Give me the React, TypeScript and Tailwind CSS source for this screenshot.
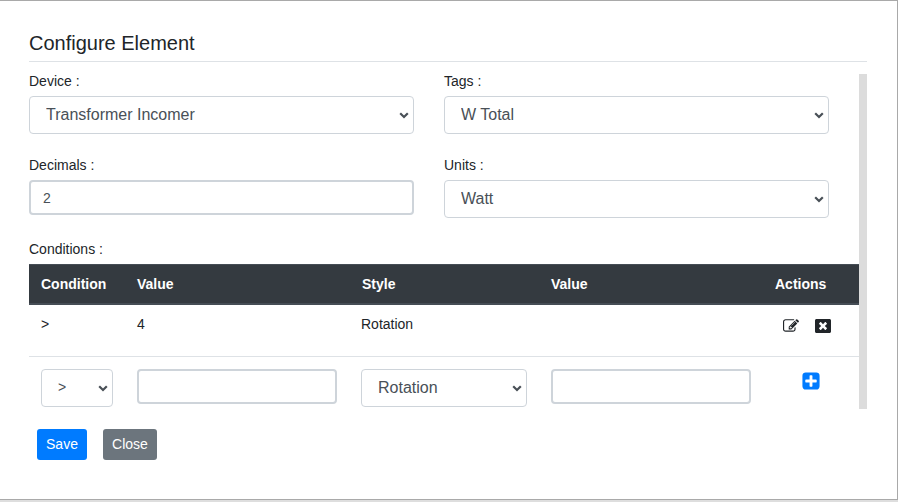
import type { ReactNode } from "react";
import { FaWindowClose } from "react-icons/fa";

const INPUT =
  "block h-[35px] w-full rounded border-2 border-[#ced4da] bg-white px-3 text-[14px] text-[#495057]";

function Select({ value, small = false }: { value: string; small?: boolean }) {
  return (
    <div className="relative">
      <select
        className={`block h-[38px] w-full appearance-none rounded border border-[#ced4da] bg-white px-4 text-[#495057] ${
          small ? "pt-[5px] pb-[7px] text-[14px]" : "pt-1.5 pb-[7px] text-[16px]"
        }`}
      >
        <option>{value}</option>
      </select>
      <svg
        viewBox="0 0 10 7"
        className="pointer-events-none absolute right-[5px] top-4 h-[7px] w-[10px]"
        fill="none"
        stroke="#495057"
        strokeWidth="2.2"
      >
        <path d="M1.2 1.2L5 5l3.8-3.8" />
      </svg>
    </div>
  );
}

function Field({ label, children }: { label: string; children: ReactNode }) {
  return (
    <div className="h-[84px]">
      <label className="block h-[22px] leading-[15px]">{label}</label>
      {children}
    </div>
  );
}

function EditIcon() {
  return (
    <svg viewBox="0 0 1792 1792" className="size-4" fill="currentColor">
      <path d="M888 1184l116-116-152-152-116 116v56h96v96h56zm440-720q-16-16-33 1l-350 350q-17 17-1 33t33-1l350-350q17-17 1-33zm80 594v190q0 119-84.5 203.5t-203.5 84.5h-832q-119 0-203.5-84.5t-84.5-203.5v-832q0-119 84.5-203.5t203.5-84.5h832q63 0 117 25 15 7 18 23 3 17-9 29l-49 49q-14 14-32 8-23-6-45-6h-832q-66 0-113 47t-47 113v832q0 66 47 113t113 47h832q66 0 113-47t47-113v-126q0-13 9-22l64-64q15-15 35-7t20 29zm-96-738l288 288-672 672h-288v-288zm444 132l-92 92-288-288 92-92q28-28 68-28t68 28l152 152q28 28 28 68t-28 68z" />
    </svg>
  );
}

function PlusIcon() {
  return (
    <svg viewBox="0 0 1792 1792" className="size-5" fill="currentColor">
      <path d="M1408 960v-128q0-26-19-45t-45-19h-320v-320q0-26-19-45t-45-19h-128q-26 0-45 19t-19 45v320h-320q-26 0-45 19t-19 45v128q0 26 19 45t45 19h320v320q0 26 19 45t45 19h128q26 0 45-19t19-45v-320h320q26 0 45-19t19-45zm256-544v960q0 119-84.5 203.5t-203.5 84.5h-960q-119 0-203.5-84.5t-84.5-203.5v-960q0-119 84.5-203.5t203.5-84.5h960q119 0 203.5 84.5t84.5 203.5z" />
    </svg>
  );
}

const ROW = "grid grid-cols-[96px_224px_190px_224px_96px]";

export default function App() {
  return (
    <div className="h-[502px] w-[898px] bg-[#dedede] font-['Liberation_Sans',Arial,sans-serif] text-[14px] text-[#212529]">
      <div className="h-[500px] border-t border-r border-b border-[#a9a9a9] bg-white pl-[29px] pr-[30px] pt-[29px]">
        <h1 className="h-8 border-b border-[#dee2e6] text-[20px] leading-[27px]">Configure Element</h1>

        <div className="mt-3 flex h-[335px] w-[838px]">
          <div className="w-[830px]">
            <div className="grid w-[800px] grid-cols-2 gap-x-[30px]">
              <Field label="Device :">
                <Select value="Transformer Incomer" />
              </Field>
              <Field label="Tags :">
                <Select value="W Total" />
              </Field>
              <Field label="Decimals :">
                <input className={INPUT} defaultValue="2" />
              </Field>
              <Field label="Units :">
                <Select value="Watt" />
              </Field>
            </div>

            <div className="h-[22px] leading-[15px]">Conditions :</div>

            <div
              className={`${ROW} h-[41px] border-t border-b-2 border-[#454d55] bg-[#343a40] font-bold leading-[38px] text-white`}
            >
              <div className="pl-3">Condition</div>
              <div className="pl-3">Value</div>
              <div className="pl-[13px]">Style</div>
              <div className="pl-3">Value</div>
              <div className="pl-3">Actions</div>
            </div>

            <div className={`${ROW} h-[51px] leading-[38px]`}>
              <div className="pl-3">&gt;</div>
              <div className="pl-3">4</div>
              <div className="pl-3">Rotation</div>
              <div />
              <div className="flex gap-4 pl-5 pt-[13px]">
                <EditIcon />
                <FaWindowClose size={16} />
              </div>
            </div>

            <div className={`${ROW} h-[53px] border-t border-[#dee2e6] pt-3`}>
              <div className="px-3">
                <Select value=">" small />
              </div>
              <div className="px-3">
                <input className={INPUT} />
              </div>
              <div className="px-3">
                <Select value="Rotation" />
              </div>
              <div className="px-3">
                <input className={INPUT} />
              </div>
              <div className="flex justify-center pt-0.5 text-[#007bff]">
                <PlusIcon />
              </div>
            </div>
          </div>
          <div className="w-2 bg-[#dcdcdc]" />
        </div>

        <div className="mt-5 flex gap-4 pl-2 text-white">
          <button className="h-[31px] w-[50px] rounded-[3px] bg-[#007bff]">Save</button>
          <button className="h-[31px] w-[54px] rounded-[3px] bg-[#6c757d]">Close</button>
        </div>
      </div>
    </div>
  );
}
